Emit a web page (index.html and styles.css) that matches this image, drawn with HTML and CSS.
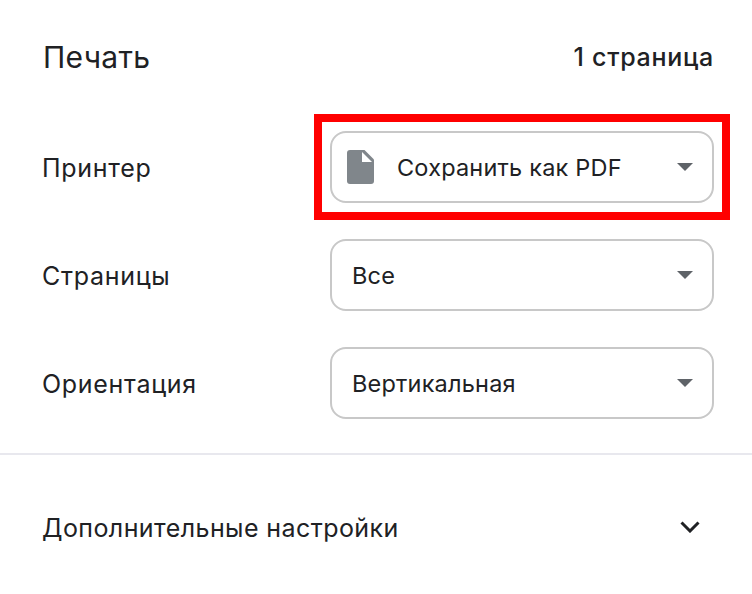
FILE: index.html
```html
<!DOCTYPE html>
<html lang="ru">
<head>
<meta charset="utf-8">
<title>Печать</title>
<link rel="stylesheet" href="styles.css">
</head>
<body>
<main class="panel">
  <header class="head">
    <h1 class="title">Печать</h1>
    <span class="count">1 страница</span>
  </header>
  <div class="rows">
    <div class="row">
      <span class="label">Принтер</span>
      <div class="select select-highlighted">
        <svg class="doc" viewBox="0 0 27 34" aria-hidden="true"><path fill="#80868b" d="M3 0h14.500L27 9.500V31a3 3 0 0 1-3 3H3a3 3 0 0 1-3-3V3a3 3 0 0 1 3-3z"/><path fill="#fff" d="M15 2 25 12H15z"/></svg>
        <span class="value value-icon">Сохранить как PDF</span>
        <span class="caret"></span>
      </div>
    </div>
    <div class="row">
      <span class="label">Страницы</span>
      <div class="select">
        <span class="value">Все</span>
        <span class="caret"></span>
      </div>
    </div>
    <div class="row">
      <span class="label">Ориентация</span>
      <div class="select">
        <span class="value">Вертикальная</span>
        <span class="caret"></span>
      </div>
    </div>
  </div>
  <hr class="divider">
  <div class="more">
    <span class="label label-more">Дополнительные настройки</span>
    <svg class="chevron" viewBox="0 0 20 12" aria-hidden="true"><path d="M1.500 1.500 10 10l8.500-8.500" fill="none" stroke="#202124" stroke-width="3"/></svg>
  </div>
</main>
</body>
</html>
```
FILE: styles.css
```css
*, *::after { box-sizing: border-box; }
html, body { margin: 0; padding: 0; background: #fff; }
body { width: 752px; height: 594px; overflow: hidden; font-family: Inter, Roboto, "Liberation Sans", sans-serif; color: #202124; }
.panel { display: flex; flex-direction: column; }
.head { display: flex; justify-content: space-between; align-items: center; padding: 38px 38px 0 43px; height: 75px; }
.title { margin: 0; font-size: 30px; font-weight: 400; line-height: 38px; letter-spacing: 0.3px; }
.count { font-size: 25px; font-weight: 500; line-height: 38px; letter-spacing: 0.7px; }
.rows { display: flex; flex-direction: column; gap: 36px; padding: 56px 38px 0 42px; }
.row { display: flex; justify-content: space-between; align-items: center; height: 72px; }
.label { font-size: 25px; line-height: 34px; letter-spacing: 0.7px; padding-top: 2px; }
.label-more { letter-spacing: 0.42px; padding-top: 0; }
.select { position: relative; width: 384px; height: 72px; border: 2px solid #c8c8c8; border-radius: 16px; display: flex; align-items: center; padding: 0 20px; }
.select-highlighted::after { content: ""; position: absolute; left: -18px; top: -19px; width: 416px; height: 106px; border: 8px solid #ff0000; }
.value { flex: 1; font-size: 23.5px; line-height: 34px; letter-spacing: 0.2px; padding-top: 2px; }
.value-icon { padding-left: 23px; }
.doc { width: 27px; height: 34px; margin-left: -5px; flex: none; }
.caret { width: 0; height: 0; border-left: 8px solid transparent; border-right: 8px solid transparent; border-top: 8px solid #5f6368; margin-right: -1px; flex: none; }
.divider { margin: 34px 0 0; border: 0; border-top: 2px solid #e8e8ee; }
.more { display: flex; justify-content: space-between; align-items: center; padding: 56px 52px 0 42px; }
.chevron { width: 20px; height: 12px; margin-bottom: 2px; flex: none; }
```
